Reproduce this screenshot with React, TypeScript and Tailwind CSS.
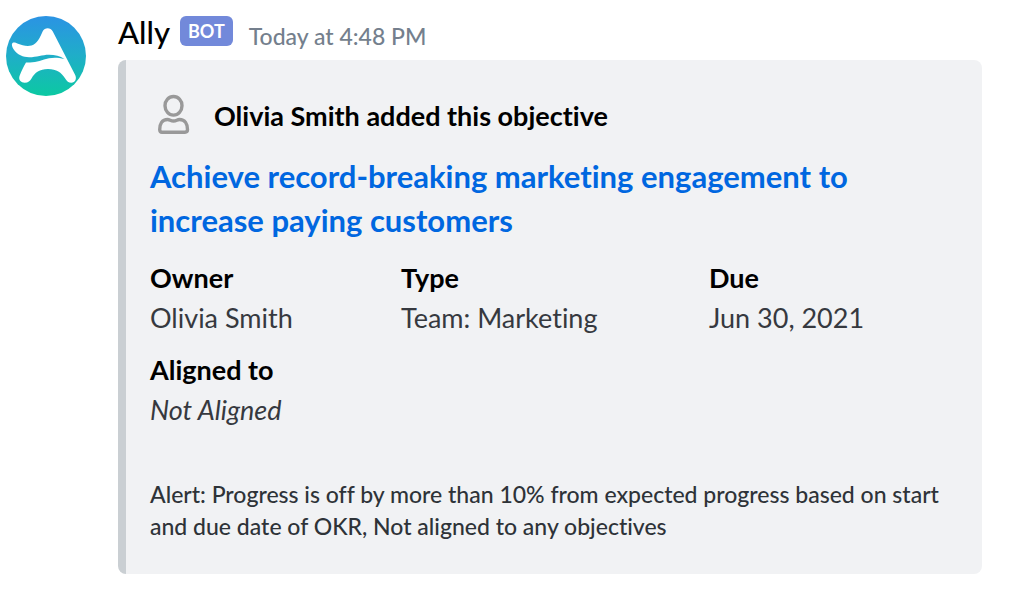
import React from "react";

function AllyLogo() {
  return (
    <svg viewBox="0 0 80 80" className="size-20 shrink-0" role="img" aria-label="Ally">
      <defs>
        <linearGradient id="ally-bg" x1="0" y1="0" x2="0" y2="1">
          <stop offset="0" stopColor="#2b93e4" />
          <stop offset="0.5" stopColor="#1faec8" />
          <stop offset="1" stopColor="#0cc9a2" />
        </linearGradient>
      </defs>
      <circle cx="40" cy="40" r="40" fill="url(#ally-bg)" />
      <path
        fill="#fff"
        d="M6.500 27C5.300 28 6 30.500 7.400 33C11 39 17.500 41.200 23 41.200C31 41.200 36 38.700 43 38.700C49 38.700 54 40 58.500 43C52 41.500 48 41.300 43 42.300C36 44 31 46.400 24 46.600L20 46.600C18 50 15.500 55 13.700 59.500C12 64 15 66.700 18.700 66.700C22.300 66.700 24 65 25.500 62.500C29 56.500 33.500 53 42 53C50.500 53 55.500 56.500 59 62.300C61 65.500 62.500 66.700 65.300 66.700C69.300 66.700 71 62.800 69.200 59L46.800 15.500C44.500 11.300 38.800 11.300 36.600 15.500C34 21.500 31 28 25.500 29.600C21 30.700 16 29.500 12 27.800C9.500 26.700 7.800 26.200 6.500 27Z"
      />
    </svg>
  );
}

function PersonIcon() {
  return (
    <svg viewBox="0 0 32 44" className="h-11 w-8 shrink-0" fill="none" stroke="#999999" strokeWidth="3.4" aria-hidden="true">
      <ellipse cx="15.500" cy="11.800" rx="8.500" ry="9.300" />
      <path d="M9.500 25.500C12 25.500 12.500 27 15.500 27C18.500 27 19 25.500 21.500 25.500C27 25.500 29.500 30 29.500 35.500Q29.500 38.200 27 38.200H4Q1.700 38.200 1.700 35.500C1.700 30 4 25.500 9.500 25.500Z" />
    </svg>
  );
}

function Field({ label, children }: { label: string; children: React.ReactNode }) {
  return (
    <div>
      <dt className="font-bold text-black">{label}</dt>
      <dd className="text-[#36393f]">{children}</dd>
    </div>
  );
}

export default function App() {
  return (
    <article className="flex items-start gap-8 bg-white py-4 pr-9 pl-1.5 font-['Lato',sans-serif] [font-variant-ligatures:none]">
      <AllyLogo />
      <div className="min-w-0 flex-1">
        <header className="flex h-11 items-start">
          <span className="text-[31px] leading-8 font-medium text-black">Ally</span>
          <span className="ml-2.5 flex h-[30px] items-center rounded-md bg-[#7289da] px-2 text-lg font-bold text-white">
            BOT
          </span>
          <time className="ml-4 text-[23px] leading-10 font-medium text-[#747f8d]">Today at 4:48 PM</time>
        </header>
        <section className="rounded-lg border-l-8 border-[#cacfd3] bg-[#f1f2f4] px-6 py-8">
          <div className="flex items-center gap-6 pl-2">
            <PersonIcon />
            <h2 className="text-[27px] leading-12 font-bold text-black">Olivia Smith added this objective</h2>
          </div>
          <h1 className="mt-3.5 text-[31px] leading-11 font-bold">
            <a href="#objective" className="text-[#0067e0]">
              Achieve record-breaking marketing engagement to increase paying customers
            </a>
          </h1>
          <dl className="mt-4 grid grid-cols-[251fr_308fr_249fr] gap-y-3 text-[27px] leading-10">
            <Field label="Owner">Olivia Smith</Field>
            <Field label="Type">Team: Marketing</Field>
            <Field label="Due">Jun 30, 2021</Field>
            <Field label="Aligned to">
              <em>Not Aligned</em>
            </Field>
          </dl>
          <p className="mt-12 text-[23px] leading-8 font-medium text-[#2e3338]">
            Alert: Progress is off by more than 10% from expected progress based on start and due date of OKR, Not
            aligned to any objectives
          </p>
        </section>
      </div>
    </article>
  );
}
